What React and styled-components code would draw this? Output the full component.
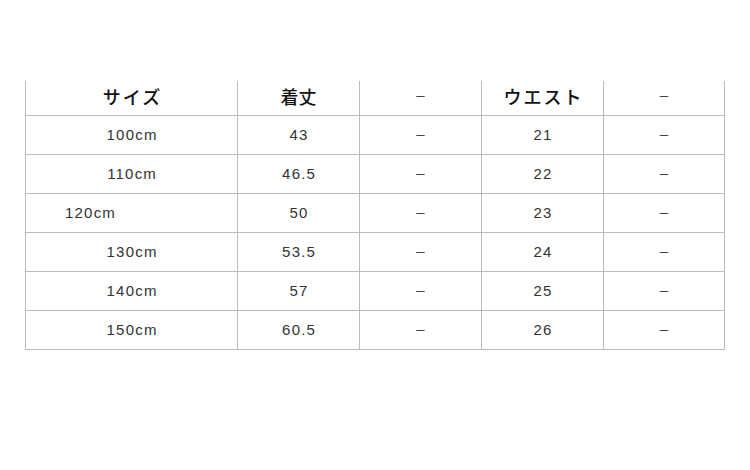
import React from "react";
import styled, { createGlobalStyle } from "styled-components";

const Global = createGlobalStyle`
  html, body { margin: 0; padding: 0; background: #fff; }
  body { width: 750px; height: 470px; overflow: hidden; }
`;

const Page = styled.div`
  padding: 81px 0 0 25px;
  box-sizing: border-box;
  width: 750px;
  height: 470px;
`;

const Table = styled.div`
  display: grid;
  grid-template-columns: 212px 122px 122px 122px 121px;
  grid-template-rows: 35px repeat(6, 39px);
  width: 700px;
  border-left: 1px solid #bcbcbc;
`;

const Cell = styled.div`
  box-sizing: border-box;
  border-right: 1px solid #bcbcbc;
  border-bottom: 1px solid #bcbcbc;
  display: flex;
  align-items: center;
  justify-content: ${(p) => (p.$left ? "flex-start" : "center")};
  padding-left: ${(p) => (p.$left ? "39px" : "0")};
  padding-bottom: ${(p) => (p.$head ? "5px" : "1px")};
`;

const HeadText = styled.span`
  font-family: "Noto Sans CJK JP", "Noto Sans", sans-serif;
  font-size: 18px;
  font-weight: 500;
  color: #111;
  letter-spacing: ${(p) => (p.$wide ? "2px" : "0")};
  margin-right: ${(p) => (p.$wide ? "-2px" : "0")};
`;

const NumText = styled.span`
  font-family: "Liberation Sans", Arial, sans-serif;
  font-size: 15px;
  color: #333;
  letter-spacing: 1.2px;
  margin-right: -1.2px;
`;

const Dash = styled.span`
  font-family: "Liberation Sans", Arial, sans-serif;
  font-size: 15px;
  color: #444;
  margin-top: -2px;
`;

const rows = [
  ["100cm", "43", "21"],
  ["110cm", "46.5", "22"],
  ["120cm", "50", "23", true],
  ["130cm", "53.5", "24"],
  ["140cm", "57", "25"],
  ["150cm", "60.5", "26"],
];

export default function App() {
  return (
    <Page>
      <Global />
      <Table>
        <Cell $head><HeadText $wide>サイズ</HeadText></Cell>
        <Cell $head><HeadText>着丈</HeadText></Cell>
        <Cell $head><Dash>–</Dash></Cell>
        <Cell $head><HeadText $wide>ウエスト</HeadText></Cell>
        <Cell $head><Dash>–</Dash></Cell>
        {rows.map(([size, len, waist, left]) => (
          <React.Fragment key={size}>
            <Cell $left={left}><NumText>{size}</NumText></Cell>
            <Cell><NumText>{len}</NumText></Cell>
            <Cell><Dash>–</Dash></Cell>
            <Cell><NumText>{waist}</NumText></Cell>
            <Cell><Dash>–</Dash></Cell>
          </React.Fragment>
        ))}
      </Table>
    </Page>
  );
}
